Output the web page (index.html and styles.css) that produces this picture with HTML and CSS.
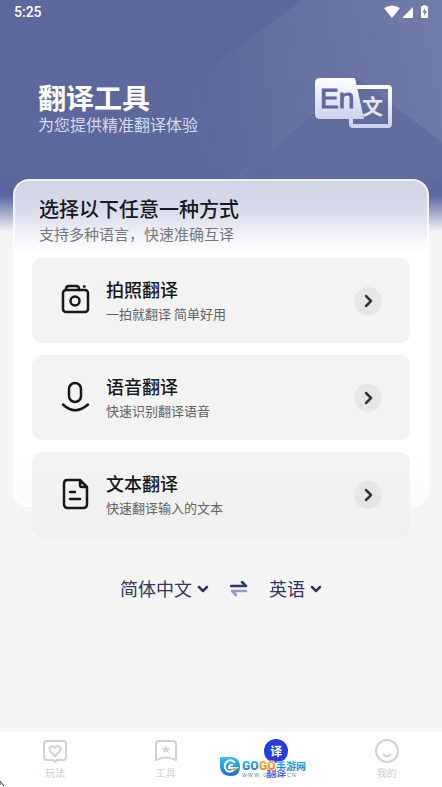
FILE: index.html
```html
<!DOCTYPE html>
<html lang="zh-CN">
<head>
<meta charset="utf-8">
<meta name="viewport" content="width=device-width, initial-scale=1">
<title>翻译工具</title>
<link rel="stylesheet" href="styles.css">
</head>
<body>
<svg class="facets" viewBox="0 0 442 235" preserveAspectRatio="none" aria-hidden="true">
  <defs>
    <linearGradient id="f1" gradientUnits="userSpaceOnUse" x1="180" y1="110" x2="442" y2="60"><stop offset="0" stop-color="#fff" stop-opacity="0"/><stop offset=".3" stop-color="#fff" stop-opacity=".04"/><stop offset="1" stop-color="#fff" stop-opacity=".13"/></linearGradient>
    <linearGradient id="f2" gradientUnits="userSpaceOnUse" x1="290" y1="120" x2="420" y2="200"><stop offset="0" stop-color="#fff" stop-opacity=".03"/><stop offset="1" stop-color="#fff" stop-opacity=".04"/></linearGradient>
  </defs>
  <path d="M302 0H442V142L355 76L240 178H60Z" fill="url(#f1)"/>
  <path d="M355 76L442 142V235H170Z" fill="url(#f2)"/>
</svg>
<header class="status">
  <span>5:25</span>
  <svg width="46" height="16" viewBox="0 0 46 16" fill="#fff" aria-hidden="true">
    <path d="M0 4Q8-1 16 4L8 14Z"/>
    <path d="M29 3V14H18Z"/>
    <path d="M38 2H39V1H42V2H43Q44 2 44 3V13Q44 14 43 14H38Q37 14 37 13V3Q37 2 38 2Z"/>
    <path d="M41 4L38.500 8.500H40.300V12L42.800 7.300H41Z" fill="#6b76a8"/>
  </svg>
</header>
<main>
  <div class="hero">
    <div>
      <h1>翻译工具</h1>
      <p>为您提供精准翻译体验</p>
    </div>
    <svg class="hero-icon" width="78" height="52" viewBox="0 0 78 52" role="img" aria-label="En 文">
      <defs><linearGradient id="w" x1="0" y1="0" x2="0" y2="1"><stop offset="0" stop-color="#fff"/><stop offset="1" stop-color="#cdd2ec"/></linearGradient></defs>
      <path d="M41 9H73Q75 9 75 11V46Q75 48 73 48H38Q36 48 36 46V38" fill="none" stroke="url(#w)" stroke-width="4"/>
      <path d="M5 0H40L49 41H5Q0 41 0 36V5Q0 0 5 0Z" fill="url(#w)"/>
      <text class="en" x="5" y="30">En</text>
      <text class="wen" x="47" y="36">文</text>
    </svg>
  </div>
  <section class="panel">
    <div class="panel-bg"></div>
    <h2>选择以下任意一种方式</h2>
    <p class="lead">支持多种语言，快速准确互译</p>
    <div class="options">
      <button class="option" type="button">
        <svg class="pic" width="30" height="32" viewBox="0 0 30 32" aria-hidden="true"><rect x="3" y="5" width="25" height="22" rx="3"/><path d="M6 5V4Q6 1 9 1H16Q19 1 19 4V5"/><circle cx="15" cy="16" r="4.500"/><path d="M24 1.500H24.500"/></svg>
        <span class="words"><strong>拍照翻译</strong><small>一拍就翻译 简单好用</small></span>
        <span class="go"><svg width="10" height="14" viewBox="0 0 10 14" aria-hidden="true"><path d="M3 2L8 7L3 12"/></svg></span>
      </button>
      <button class="option" type="button">
        <svg class="pic" width="30" height="32" viewBox="0 0 30 32" aria-hidden="true"><rect x="9" y="1" width="12" height="19" rx="6"/><path d="M3 22.500Q15 34 28 22.500"/></svg>
        <span class="words"><strong>语音翻译</strong><small>快速识别翻译语音</small></span>
        <span class="go"><svg width="10" height="14" viewBox="0 0 10 14" aria-hidden="true"><path d="M3 2L8 7L3 12"/></svg></span>
      </button>
      <button class="option" type="button">
        <svg class="pic" width="30" height="32" viewBox="0 0 30 32" aria-hidden="true"><path d="M7 1H20L27 8V25Q27 29 23 29H8Q4 29 4 25V5Q4 1 7 1ZM20 1V6Q20 8 22 8H27M10 13H15M10 20H20"/></svg>
        <span class="words"><strong>文本翻译</strong><small>快速翻译输入的文本</small></span>
        <span class="go"><svg width="10" height="14" viewBox="0 0 10 14" aria-hidden="true"><path d="M3 2L8 7L3 12"/></svg></span>
      </button>
    </div>
  </section>
  <div class="langs">
    <button type="button">简体中文<svg width="12" height="8" viewBox="0 0 12 8" aria-hidden="true"><path d="M2 2L6 6L10 2"/></svg></button>
    <button type="button" aria-label="互换语言"><svg width="18" height="16" viewBox="0 0 18 16" aria-hidden="true"><path d="M1 5H16L12 1"/><path class="back" d="M16 10H2L6 14"/></svg></button>
    <button type="button">英语<svg width="12" height="8" viewBox="0 0 12 8" aria-hidden="true"><path d="M2 2L6 6L10 2"/></svg></button>
  </div>
</main>
<nav class="tabs">
  <a href="#play"><svg width="24" height="24" viewBox="0 0 24 24" aria-hidden="true"><path d="M4 2H20Q23 2 23 5V18Q23 21 20 21H14L12 23L10 21H4Q1 21 1 18V5Q1 2 4 2Z"/><path d="M12 17L7.500 12.500Q5.500 10 7.500 8Q10 6 12 9Q14 6 16.500 8Q18.500 10 16.500 12.500Z"/></svg>玩法</a>
  <a href="#tools"><svg width="24" height="24" viewBox="0 0 24 24" aria-hidden="true"><path d="M5 2H19Q22 2 22 5V21Q12 16 2 21V5Q2 2 5 2Z"/><path class="solid" d="M12 6L13.300 9H16.300L14 11L15 14L12 12.300L9 14L10 11L7.700 9H10.700Z"/></svg>工具</a>
  <a class="active" href="#translate" aria-current="page"><span class="disc">译</span>翻译</a>
  <a href="#me"><svg width="24" height="24" viewBox="0 0 24 24" aria-hidden="true"><circle cx="12" cy="12" r="11"/><path d="M8.500 15.500Q12 19 15.500 15.500"/></svg>我的</a>
  <svg class="mark" width="88" height="24" viewBox="0 0 88 24" role="img" aria-label="GOGO手游网">
    <defs>
      <linearGradient id="b" x1="0" y1="0" x2="0" y2="1"><stop offset="0" stop-color="#35c5ee"/><stop offset="1" stop-color="#1470c4"/></linearGradient>
      <linearGradient id="o" x1="0" y1="0" x2="0" y2="1"><stop offset="0" stop-color="#ffb52e"/><stop offset="1" stop-color="#f47b12"/></linearGradient>
    </defs>
    <path d="M0 1H12Q20 2 20 11Q20 20 11 20Q1 20 0 11Z" fill="url(#b)"/>
    <path d="M15 7Q12 3 8 5Q4 7 5 12Q7 17 12 15L16 12H9Q9 8 13 9" fill="none" stroke="#fff" stroke-width="2"/>
    <path d="M11 13L17 11L15 15Z" fill="#ff9d20"/>
    <text class="gogo" x="22" y="14" fill="url(#b)">GO</text>
    <text class="gogo" x="39" y="14" fill="url(#o)">GO</text>
    <text class="site" x="56" y="14" fill="url(#b)">手游网</text>
    <text class="url" x="22" y="21">W W W . G O G O . C N</text>
  </svg>
  <svg class="pointer" width="5" height="6" viewBox="0 0 5 6" aria-hidden="true"><path d="M0 0L4 5M0 2V4"/></svg>
</nav>
</body>
</html>
```
FILE: styles.css
```css
* { box-sizing: border-box; }
body {
  margin: 0;
  min-height: 100vh;
  display: flex;
  flex-direction: column;
  position: relative;
  font-family: "Noto Sans CJK SC", sans-serif;
  color: #17181c;
  background: #f5f5f6 linear-gradient(#5c689b 0, #5d689c 170px, #5862a0 195px, #f5f5f6 232px) no-repeat;
}
h1, h2, p { margin: 0; }
button { border: 0; padding: 0; background: none; font: inherit; color: inherit; }
.facets {
  position: absolute;
  top: 0;
  left: 0;
  width: 100%;
  height: 235px;
  -webkit-mask-image: linear-gradient(#000 75%, transparent 90%);
  mask-image: linear-gradient(#000 75%, transparent 90%);
}
.status {
  position: relative;
  display: flex;
  justify-content: space-between;
  align-items: center;
  height: 24px;
  padding: 0 12px 0 14px;
  color: #fff;
  font: 500 14px/24px Roboto, sans-serif;
}
main { position: relative; padding: 0 13px; }
.hero {
  display: flex;
  justify-content: space-between;
  align-items: flex-start;
  height: 155px;
  padding: 54px 36px 0 25px;
  color: #fff;
}
.hero h1 { font-size: 28px; line-height: 38px; font-weight: 700; }
.hero p { font-size: 16px; line-height: 17px; color: #d5daf0; }
.en { font: 28px "Liberation Sans", sans-serif; fill: #5d689c; stroke: #5d689c; }
.wen { font: 700 21px "Noto Sans CJK SC", sans-serif; fill: #e4e7f6; }
.panel { position: relative; padding: 17px 19px 0; }
.panel-bg {
  position: absolute;
  inset: 0 0 30px;
  border: 2px solid rgba(255, 255, 255, .7);
  border-radius: 16px;
  background: linear-gradient(#d0d4e3, #d7daeb 30px, #f5f5fb 60px, #fff 76px, #fff 270px, #fafafa) border-box;
}
.panel h2, .lead { position: relative; padding-left: 7px; }
.panel h2 { font-size: 20px; line-height: 26px; font-weight: 500; }
.lead { font-size: 15px; line-height: 24px; color: #77787d; }
.options { position: relative; display: grid; gap: 12px; padding-top: 12px; }
.option {
  display: flex;
  align-items: center;
  height: 85px;
  padding: 0 28px;
  border-radius: 10px;
  background: #f3f3f3;
  text-align: left;
}
.option:last-child { background: linear-gradient(#f3f3f3, #f0f0f0); }
.pic { overflow: visible; fill: none; stroke: #17181a; stroke-width: 2.5; stroke-linecap: round; stroke-linejoin: round; }
.words { flex: 1; display: flex; flex-direction: column; padding-left: 16px; }
.words strong { font-size: 18px; line-height: 26px; font-weight: 500; }
.words small { font-size: 13px; line-height: 24px; color: #626366; }
.go { display: grid; place-items: center; width: 28px; height: 28px; border-radius: 50%; background: #e6e6e6; }
.go svg { fill: none; stroke: #353535; stroke-width: 2.5; stroke-linecap: round; stroke-linejoin: round; }
.langs {
  display: flex;
  justify-content: center;
  align-items: center;
  gap: 21px;
  padding-top: 38px;
  font-size: 18px;
  line-height: 27px;
  color: #31375f;
}
.langs button { display: flex; align-items: center; gap: 5px; }
.langs svg { fill: none; stroke: #31375f; stroke-width: 2.5; stroke-linecap: round; stroke-linejoin: round; }
.langs .back { stroke: #919bd0; }
.tabs {
  position: relative;
  display: grid;
  grid-template-columns: repeat(4, 1fr);
  margin-top: auto;
  height: 55px;
  padding-top: 7px;
  background: #fff;
}
.tabs a {
  display: flex;
  flex-direction: column;
  align-items: center;
  font-size: 10px;
  line-height: 20px;
  color: #d0d0d0;
  text-decoration: none;
}
.tabs a svg { fill: none; stroke: #d2d2d2; stroke-width: 2; stroke-linejoin: round; stroke-linecap: round; }
.tabs .solid { fill: #d2d2d2; stroke: none; }
.tabs .active { color: #2438dc; }
.disc { width: 24px; height: 24px; border-radius: 50%; background: #263be0; color: #fff; font-size: 12px; line-height: 23px; font-weight: 700; text-align: center; }
.mark { position: absolute; left: calc(50% - 1px); bottom: 7px; }
.gogo { font: 900 12px Roboto, sans-serif; }
.site { font: 700 10px "Noto Sans CJK SC", sans-serif; }
.mark text { paint-order: stroke; stroke: #fff; stroke-width: 1px; }
.mark .url { font: 5px "Liberation Sans", sans-serif; fill: #4f86a8; stroke: none; }
.pointer { position: absolute; left: 0; bottom: 0; fill: none; stroke: #222; }
```
